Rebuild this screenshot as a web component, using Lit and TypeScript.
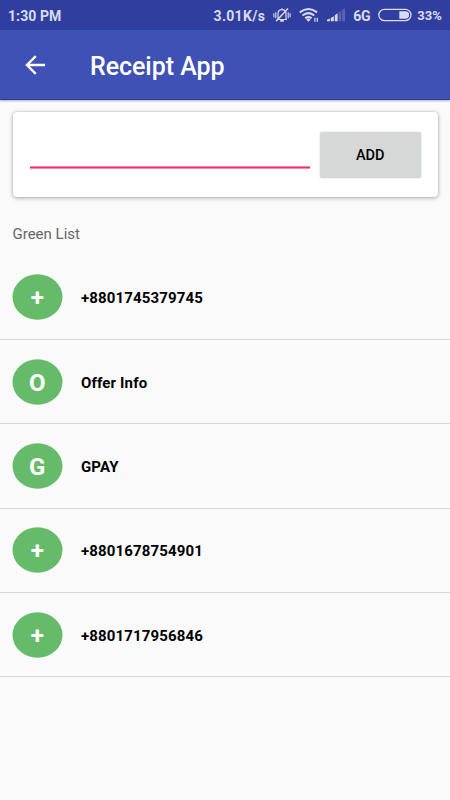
import { LitElement, html, css, svg } from "lit";
import { customElement } from "lit/decorators.js";

const contacts = [
  { initial: "+", name: "+8801745379745" },
  { initial: "O", name: "Offer Info" },
  { initial: "G", name: "GPAY" },
  { initial: "+", name: "+8801678754901" },
  { initial: "+", name: "+8801717956846" },
];

@customElement("status-bar")
class StatusBar extends LitElement {
  static styles = css`
    :host { display: flex; align-items: center; height: 30px; padding: 0 8px; background: #303f9f; color: #d9dcf0; font: 700 14px/30px Roboto, sans-serif; white-space: nowrap; }
    .time { margin-right: auto; padding-top: 1px; letter-spacing: 0.08px; }
    .speed { letter-spacing: 0.3px; padding-top: 1px; margin-right: 8px; }
    .net { padding-top: 1px; margin: 0 8px 0 8px; letter-spacing: -0.2px; }
    .pct { font-size: 13px; font-weight: 700; letter-spacing: 0.05px; padding-top: 1px; margin-left: 5px; }
    svg { display: block; flex: none; }
    .wifi { margin: 0 8px 0 8px; }
  `;
  render() {
    return html`
      <span class="time">1:30 PM</span>
      <span class="speed">3.01K/s</span>
      <svg width="18" height="16" viewBox="0 0 18 16" fill="none" stroke="#d9dcf0" stroke-width="1.2">
        <path d="M4 12.5h10M5 12.3V7C5 4.2 6.6 2.7 9 2.7s4 1.5 4 4.3v5.3M9 1.2v1.5" />
        <path d="M7.2 13.9h3.6" stroke-width="1.7" />
        <path d="M3 14.2L15 1.4" stroke-width="1.4" />
        <path d="M.9 6.2v4M2.8 5.2v6M15.2 5.2v6M17.1 6.2v4" stroke-width="1.1" />
      </svg>
      <svg class="wifi" width="20" height="16" viewBox="0 0 20 16" fill="none" stroke="#d9dcf0" stroke-width="2">
        <path d="M.7 5.4Q9.4-1.4 18.1 5.4" />
        <path d="M3.5 8.5Q9.4 3.8 15.3 8.5" />
        <path d="M6.2 11.3Q9.4 8.9 12.6 11.3" />
        <path d="M7.1 12.4Q9.4 11 11.7 12.4L9.4 14.8z" fill="#d9dcf0" stroke="none" />
        <path d="M15.9 10.8v4M18.3 10.8v4" stroke-width="1.2" />
      </svg>
      <svg width="18" height="14" viewBox="0 0 18 14" fill="#d9dcf0">
        <path d="M0 13.2V11.8L2.8 10.4V13.2zM3.8 13.2V9.9L6.8 8.2V13.2zM7.8 13.2V7.3L10.6 5.3V13.2z" />
        <path d="M11.6 13.2V4.5L14.2 2.7V13.2zM15.2 13.2V2L18 .3V13.2z" opacity=".25" />
      </svg>
      <span class="net">6G</span>
      <svg width="34" height="14" viewBox="0 0 34 14" fill="none" stroke="#d9dcf0" stroke-width="1.3">
        <rect x=".8" y="1.3" width="32.2" height="11.4" rx="5.7" />
        <path d="M21.3 3.3H27.4A3.7 3.7 0 0 1 27.4 10.7H21.3z" fill="#d9dcf0" stroke="none" />
      </svg>
      <span class="pct">33%</span>
    `;
  }
}

@customElement("contact-row")
class ContactRow extends LitElement {
  static properties = { initial: {}, name: {} };
  static styles = css`
    :host { box-sizing: border-box; display: flex; align-items: center; height: 84.35px; padding: 0 12px; border-bottom: 1px solid #d7d7d7; font-family: Roboto, sans-serif; }
    svg { display: block; width: 51px; height: 46px; flex: none; margin-right: 18px; }
    text { font: 700 24px Roboto, sans-serif; fill: #fff; text-anchor: middle; }
    .name { font-size: 15px; letter-spacing: 0.14px; font-weight: 700; line-height: 20px; color: #000; padding-top: 2px; }
  `;
  declare initial: string;
  declare name: string;
  render() {
    return html`
      <svg viewBox="0 0 51 46">
        ${svg`<ellipse cx="25.5" cy="23" rx="25" ry="22.8" fill="#66bb6a" /><text x="25.3" y="32.3">${this.initial}</text>`}
      </svg>
      <span class="name">${this.name}</span>
    `;
  }
}

@customElement("app-root")
class AppRoot extends LitElement {
  static styles = css`
    :host { display: block; height: 800px; overflow: hidden; background: #fafafa; font-family: Roboto, sans-serif; }
    .toolbar { box-sizing: border-box; display: flex; align-items: center; height: 70px; padding: 0 25px; background: #3f51b5; color: #fff; border-bottom: 1px solid #283ca0; box-shadow: 0 1px 2px rgba(0, 0, 0, 0.3); }
    .toolbar svg { display: block; margin-right: 45px; }
    h1 { margin: 0; padding-top: 5px; font-size: 25px; font-weight: 500; line-height: 32px; letter-spacing: -0.05px; }
    .card { box-sizing: border-box; display: flex; align-items: center; height: 85px; margin: 12px 12.5px 0; padding: 0 17px 0 17.5px; gap: 10px; border-radius: 4px; background: #fff; box-shadow: 0 1px 4px rgba(0, 0, 0, 0.32), 0 0 2px rgba(0, 0, 0, 0.16); }
    .field { flex: 1; height: 25px; border-bottom: 1px solid #f52e69; box-shadow: 0 1px #f987a9, inset 0 -1px #f987a9; }
    .add { width: 100.5px; height: 46px; padding: 1px 0 0 0; border: 0; border-radius: 2px; background: #d6d7d7; color: #000; font: 500 14.5px Roboto, sans-serif; box-shadow: 0 0 2px rgba(0, 0, 0, 0.2); }
    h2 { margin: 27px 0 0 12.5px; font-size: 15px; font-weight: 400; line-height: 20px; color: #666; }
    .list { margin-top: 11.5px; }
  `;
  render() {
    return html`
      <status-bar></status-bar>
      <div class="toolbar">
        <svg width="20" height="20" viewBox="0 0 20 20" fill="none" stroke="#fff" stroke-width="2.3">
          <path d="M20 10H2M10.8 1.1L1.9 10L10.8 18.9" />
        </svg>
        <h1>Receipt App</h1>
      </div>
      <div class="card">
        <div class="field"></div>
        <button class="add">ADD</button>
      </div>
      <h2>Green List</h2>
      <div class="list">
        ${contacts.map((c) => html`<contact-row .initial=${c.initial} .name=${c.name}></contact-row>`)}
      </div>
    `;
  }
}
